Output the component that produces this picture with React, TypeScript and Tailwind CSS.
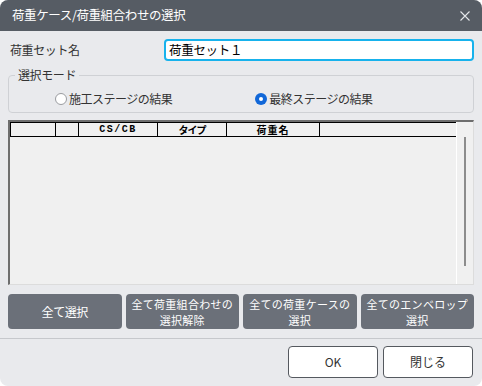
import React from "react";

const jp = { fontFamily: '"Noto Sans CJK JP", "Noto Sans", sans-serif' };

function HeaderCell({ w, children }: { w: string; children?: React.ReactNode }) {
  return (
    <div
      className={`${w} h-full flex items-center justify-center border-r border-black text-[10px] font-bold text-black leading-none`}
    >
      {children}
    </div>
  );
}

export default function App() {
  return (
    <div className="w-[482px] h-[386px] bg-white" style={jp}>
      <div className="w-full h-full rounded-[8px] overflow-hidden bg-[#e9eaed] flex flex-col">
        {/* Title bar */}
        <div className="h-[31px] shrink-0 bg-[#565c64] flex items-center justify-between pl-[12px] pr-[12px]">
          <span className="text-white text-[12.5px] tracking-[-0.4px] leading-none">荷重ケース/荷重組合わせの選択</span>
          <svg width="10" height="10" viewBox="0 0 10 10">
            <path d="M0.5 0.5 L9.5 9.5 M9.5 0.5 L0.5 9.5" stroke="#e4e6ea" strokeWidth="1.1" />
          </svg>
        </div>

        <div className="flex-1 flex flex-col px-[8px]">
          {/* Name row */}
          <div className="mt-[8px] flex items-center h-[22px]">
            <span className="w-[156px] pl-[2px] text-[12px] tracking-[-0.4px] text-[#333]">荷重セット名</span>
            <div className="flex-1 h-[22px] bg-white border-2 border-[#17b2ec] rounded-[4px] flex items-center pl-[3px] text-[12.5px] tracking-[-0.3px] text-black">
              荷重セット１
            </div>
          </div>

          {/* Group box */}
          <fieldset className="mt-[6px] border border-[#cfd1d5] rounded-[4px] px-[6px] pb-0">
            <legend className="px-[3px] text-[12px] tracking-[-0.4px] text-[#333] leading-[16px]">選択モード</legend>
            <div className="h-[29px] pt-[3px] flex items-center text-[12px] tracking-[-0.5px] text-[#333]">
              <div className="flex items-center ml-[40px]">
                <span className="w-[12px] h-[12px] rounded-full border border-[#9a9ca0] bg-white" />
                <span className="ml-[2px]">施工ステージの結果</span>
              </div>
              <div className="flex items-center ml-[83px]">
                <span className="w-[12px] h-[12px] rounded-full bg-[#1167d8] flex items-center justify-center">
                  <span className="w-[4px] h-[4px] rounded-full bg-white" />
                </span>
                <span className="ml-[2px]">最終ステージの結果</span>
              </div>
            </div>
          </fieldset>

          {/* Table */}
          <div className="mt-[7px] h-[165px] flex border-t-2 border-l-2 border-[#6e6e6e] border-r border-b border-r-[#dcdcdc] border-b-[#dcdcdc] bg-[#f0f0f0]">
            <div className="flex-1 flex flex-col">
              <div className="h-[15px] flex border-t border-b border-l border-black bg-[#f0f0f0]">
                <HeaderCell w="w-[45px]" />
                <HeaderCell w="w-[23px]" />
                <HeaderCell w="w-[79px]">
                  <span className="tracking-[1.5px]" style={{ fontFamily: '"Liberation Mono", "Noto Sans CJK JP", monospace' }}>CS/CB</span>
                </HeaderCell>
                <HeaderCell w="w-[69px]">
                  <span className="tracking-[-1px]">タイプ</span>
                </HeaderCell>
                <HeaderCell w="w-[93px]">
                  <span className="tracking-[1px]">荷重名</span>
                </HeaderCell>
                <div className="flex-1" />
              </div>
              <div className="flex-1" />
            </div>
            <div className="w-[17px] border-l border-white bg-[#f0f0f0] flex justify-center pt-[15px] pb-[18px]">
              <div className="w-[2px] h-full bg-[#8c8c8c] ml-[-1px]" />
            </div>
          </div>

          {/* Action buttons */}
          <div className="mt-[9px] grid grid-cols-4 gap-[4px] h-[35px]">
            {[
              ["全て選択"],
              ["全て荷重組合わせの", "選択解除"],
              ["全ての荷重ケースの", "選択"],
              ["全てのエンベロップ", "選択"],
            ].map((lines, i) => (
              <div
                key={i}
                className={`bg-[#6b7079] rounded-[4px] flex items-center justify-center text-white ${
                  lines.length > 1 ? "text-[11px] tracking-[0.3px]" : "text-[12px] tracking-[-0.4px]"
                }`}
              >
                <span className="block text-center leading-[16px]">
                  {lines[0]}
                  {lines[1] && (
                    <>
                      <br />
                      {lines[1]}
                    </>
                  )}
                </span>
              </div>
            ))}
          </div>
        </div>

        {/* Separator */}
        <div className="mt-[9px] border-t border-[#c6c8cc]" />

        {/* Footer */}
        <div className="h-[47px] shrink-0 flex justify-end items-start pt-[7px] pr-[9px] gap-[5px]">
          <div className="w-[90px] h-[32px] bg-white border border-[#55595f] rounded-[4px] flex items-center justify-center text-[12px] text-[#333]">
            OK
          </div>
          <div className="w-[90px] h-[32px] bg-white border border-[#55595f] rounded-[4px] flex items-center justify-center text-[12px] text-[#333]">
            閉じる
          </div>
        </div>
      </div>
    </div>
  );
}
